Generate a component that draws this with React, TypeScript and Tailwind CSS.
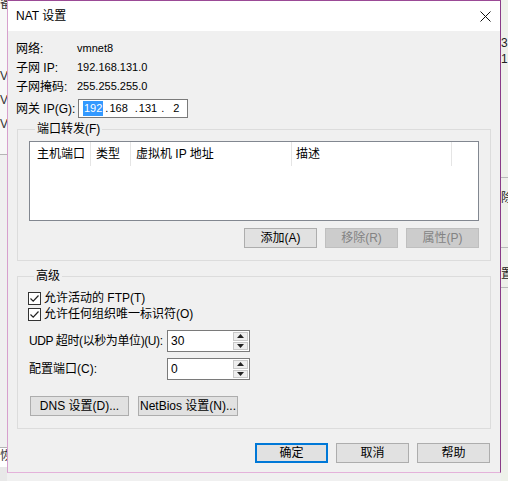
import type { ReactNode } from 'react';

const font = { fontFamily: '"Liberation Sans", "Noto Sans CJK SC", sans-serif' };

function WinButton({
  children,
  width,
  disabled,
  primary,
}: {
  children: ReactNode;
  width: string;
  disabled?: boolean;
  primary?: boolean;
}) {
  const base = 'h-[20px] flex items-center justify-center text-[12px] leading-none whitespace-nowrap';
  if (primary) {
    return (
      <div className={`${base} ${width} border-2 border-[#0078d7] bg-[#e1e1e1] text-black`}>{children}</div>
    );
  }
  if (disabled) {
    return (
      <div className={`${base} ${width} border border-[#bfbfbf] bg-[#cccccc] text-[#838383]`}>{children}</div>
    );
  }
  return <div className={`${base} ${width} border border-[#adadad] bg-[#e1e1e1] text-black`}>{children}</div>;
}

function CheckBox({ label }: { label: string }) {
  return (
    <div className="flex items-center h-[16px]">
      <div className="w-[13px] h-[13px] border border-[#333333] bg-white flex items-center justify-center">
        <svg width="11" height="11" viewBox="0 0 11 11">
          <path d="M1.5 5.5 L4.2 8.2 L9.5 2.5" fill="none" stroke="#222" strokeWidth="1.2" />
        </svg>
      </div>
      <span className="ml-[3px] text-[12px] leading-[16px]">{label}</span>
    </div>
  );
}

function Spinner({ value }: { value: string }) {
  return (
    <div className="w-[83px] h-[22px] border border-[#7a7a7a] bg-white flex">
      <div className="flex-1 pl-[3px] text-[12px] leading-[20px]">{value}</div>
      <div className="w-[17px] flex flex-col gap-[1px] p-[1px]">
        <div className="flex-1 border border-[#c9c9c9] bg-[#eeeeee] flex items-center justify-center">
          <svg width="7" height="4" viewBox="0 0 7 4">
            <path d="M0 4 L3.5 0 L7 4 Z" fill="#222" />
          </svg>
        </div>
        <div className="flex-1 border border-[#c9c9c9] bg-[#eeeeee] flex items-center justify-center">
          <svg width="7" height="4" viewBox="0 0 7 4">
            <path d="M0 0 L3.5 4 L7 0 Z" fill="#222" />
          </svg>
        </div>
      </div>
    </div>
  );
}

export default function App() {
  return (
    <div className="w-[508px] h-[481px] flex overflow-hidden bg-[#f0f0f0] text-black" style={font}>
      {/* parent window peeking out on the left */}
      <div className="w-[7px] h-full overflow-hidden bg-[#f7f7f7] flex flex-col text-[12px] leading-[16px] text-[#333]">
        <div className="h-[8px] mt-[-4px]">备</div>
        <div className="mt-[64px] h-[24px]">V</div>
        <div className="h-[24px]">V</div>
        <div className="h-[24px]">V</div>
        <div className="mt-[14px] border-t border-[#b5b5b5] flex-1 bg-[#f0f0f0]" />
        <div className="h-[20px] border-t border-[#b5b5b5] bg-white">恢</div>
        <div className="h-[14px] bg-[#e8e8e8]" />
      </div>

      {/* dialog */}
      <div className="w-[494px] h-[473px] flex flex-col border-t border-r border-b border-l border-t-[#9b4a96] border-r-[#8a3c88] border-b-[#e4b2da] border-l-[#d7a0cd] bg-[#f0f0f0]">
        <div className="h-[30px] bg-white flex items-center justify-between pl-[8px] pr-[9px]">
          <span className="text-[12px]">NAT 设置</span>
          <svg width="11" height="11" viewBox="0 0 11 11">
            <path d="M0.5 0.5 L10.5 10.5 M10.5 0.5 L0.5 10.5" stroke="#111" strokeWidth="1" />
          </svg>
        </div>

        <div className="flex flex-col text-[12px]">
          <div className="pl-[8px] pt-[8px] flex flex-col">
            <div className="flex h-[19px] items-center">
              <span className="w-[61px]">网络:</span>
              <span className="text-[11px]">vmnet8</span>
            </div>
            <div className="flex h-[19px] items-center">
              <span className="w-[61px]">子网 IP:</span>
              <span className="text-[11px]">192.168.131.0</span>
            </div>
            <div className="flex h-[19px] items-center">
              <span className="w-[61px]">子网掩码:</span>
              <span className="text-[11px]">255.255.255.0</span>
            </div>
            <div className="flex items-center mt-[3px]">
              <span className="w-[62px]">网关 IP(G):</span>
              <div className="w-[110px] h-[19px] border border-[#7a7a7a] bg-white flex items-center pl-[4px] leading-[15px] text-[11px]">
                <span className="bg-[#3399ff] text-white px-[1px]">192</span>
                <span className="ml-[2px]">.</span>
                <span className="ml-[1px]">168</span>
                <span className="ml-[7px]">.</span>
                <span className="ml-[1px]">131</span>
                <span className="ml-[4px]">.</span>
                <span className="ml-[9px]">2</span>
              </div>
            </div>
          </div>

          <fieldset className="mt-[3px] ml-[9px] w-[474px] border border-[#dcdcdc] px-[11px] pb-[12px]">
            <legend className="ml-[6px] px-[2px] leading-[16px]">端口转发(F)</legend>
            <div className="mt-[4px] h-[80px] border border-[#828790] bg-white">
              <div className="flex h-[24px] items-center">
                <div className="w-[61px] h-full pl-[7px] flex items-center border-r border-[#e5e5e5]">主机端口</div>
                <div className="w-[40px] h-full pl-[5px] flex items-center border-r border-[#e5e5e5]">类型</div>
                <div className="w-[161px] h-full pl-[5px] flex items-center border-r border-[#e5e5e5]">虚拟机 IP 地址</div>
                <div className="w-[160px] h-full pl-[4px] flex items-center border-r border-[#e5e5e5]">描述</div>
              </div>
            </div>
            <div className="mt-[7px] flex justify-end gap-[8px]">
              <WinButton width="w-[73px]">添加(A)</WinButton>
              <WinButton width="w-[73px]" disabled>
                移除(R)
              </WinButton>
              <WinButton width="w-[73px]" disabled>
                属性(P)
              </WinButton>
            </div>
          </fieldset>

          <fieldset className="mt-[7px] ml-[9px] w-[474px] border border-[#dcdcdc] pl-[10px] pr-[11px] pb-[12px]">
            <legend className="ml-[6px] px-[2px] leading-[16px]">高级</legend>
            <div className="mt-[6px] flex flex-col">
              <CheckBox label="允许活动的 FTP(T)" />
              <CheckBox label="允许任何组织唯一标识符(O)" />
            </div>
            <div className="mt-[8px] flex items-center">
              <span className="w-[139px] pl-[1px] whitespace-nowrap tracking-[-0.4px]">UDP 超时(以秒为单位)(U):</span>
              <Spinner value="30" />
            </div>
            <div className="mt-[6px] flex items-center">
              <span className="w-[139px] pl-[1px] whitespace-nowrap">配置端口(C):</span>
              <Spinner value="0" />
            </div>
            <div className="mt-[16px] pl-[2px] flex gap-[9px]">
              <WinButton width="w-[99px]">DNS 设置(D)...</WinButton>
              <WinButton width="w-[100px]">NetBios 设置(N)...</WinButton>
            </div>
          </fieldset>

          <div className="mt-[14px] pr-[10px] flex justify-end gap-[8px]">
            <WinButton width="w-[73px]" primary>
              确定
            </WinButton>
            <WinButton width="w-[73px]">取消</WinButton>
            <WinButton width="w-[73px]">帮助</WinButton>
          </div>
        </div>
      </div>

      {/* parent window peeking out on the right */}
      <div className="w-[7px] h-full overflow-hidden bg-[#eef1ea] flex flex-col text-[12px] leading-[16px] text-[#222]">
        <div className="mt-[35px] h-[16px]">3.</div>
        <div className="h-[16px]">1.</div>
        <div className="mt-[110px] border-t border-[#b9b9b9] h-[40px] pt-[12px]">除</div>
        <div className="mt-[30px] border-t border-[#b9b9b9] h-[40px] pt-[18px]">置</div>
        <div className="flex-1 border-t border-[#b9b9b9]" />
      </div>
    </div>
  );
}
